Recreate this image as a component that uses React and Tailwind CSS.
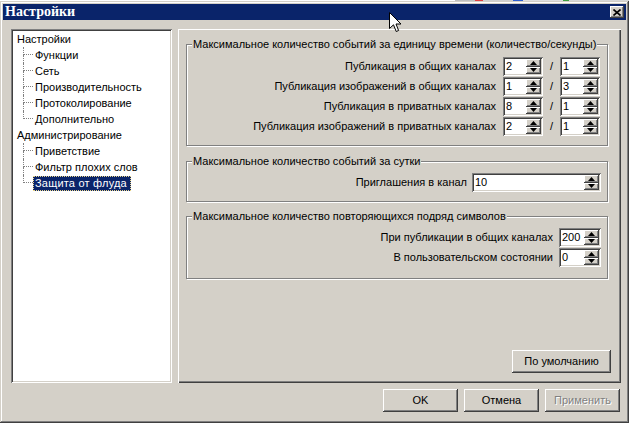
import React from "react";

const raised =
  "shadow-[inset_-1px_-1px_#404040,inset_1px_1px_#ffffff,inset_-2px_-2px_#808080,inset_2px_2px_#d4d0c8]";
const sunken =
  "shadow-[inset_1px_1px_#808080,inset_-1px_-1px_#ffffff,inset_2px_2px_#404040,inset_-2px_-2px_#d4d0c8]";

const tree = [
  {
    label: "Настройки",
    children: ["Функции", "Сеть", "Производительность", "Протоколирование", "Дополнительно"],
  },
  {
    label: "Администрирование",
    children: ["Приветствие", "Фильтр плохих слов", "Защита от флуда"],
  },
];
const selected = "Защита от флуда";

const perSecond = [
  ["Публикация в общих каналах", "2", "1"],
  ["Публикация изображений в общих каналах", "1", "3"],
  ["Публикация в приватных каналах", "8", "1"],
  ["Публикация изображений в приватных каналах", "2", "1"],
];

function Arrow({ up }) {
  return (
    <svg width="7" height="4" viewBox="0 0 7 4" className="block">
      {up ? <path d="M3.5 0 L7 4 L0 4 Z" fill="#000" /> : <path d="M0 0 L7 0 L3.5 4 Z" fill="#000" />}
    </svg>
  );
}

function SpinBtn({ up }) {
  return (
    <div className={`flex flex-1 items-center justify-center bg-[#d4d0c8] ${raised}`}>
      <Arrow up={up} />
    </div>
  );
}

function Spin({ value, width }) {
  return (
    <div className={`flex h-[19px] shrink-0 bg-white p-[2px] ${width} ${sunken}`}>
      <span className="flex-1 pl-[1px] leading-[15px] text-black">{value}</span>
      <div className="flex w-[15px] flex-col">
        <SpinBtn up />
        <SpinBtn />
      </div>
    </div>
  );
}

function Group({ title, className, children }) {
  return (
    <fieldset
      className={`mx-[6px] mr-[11px] border border-[#808080] shadow-[1px_1px_0_#ffffff,inset_1px_1px_0_#ffffff] ${className}`}
    >
      <legend className="ml-[5px] bg-[#d4d0c8] px-[1px] leading-[13px]">{title}</legend>
      {children}
    </fieldset>
  );
}

function Button({ children, disabled, className = "" }) {
  return (
    <div
      className={`flex h-[23px] items-center justify-center bg-[#d4d0c8] ${raised} ${
        disabled ? "text-[#808080] [text-shadow:1px_1px_0_#ffffff]" : "text-black"
      } ${className}`}
    >
      {children}
    </div>
  );
}

export default function App() {
  return (
    <div className="relative flex h-[423px] w-[629px] flex-col overflow-hidden bg-[#d4d0c8] font-['Liberation_Sans',Arial,sans-serif] text-[11px] text-black">
      {/* strip of desktop above the window */}
      <div className="flex h-[1px] shrink-0">
        <div className="w-[455px] bg-white" />
        <div className="w-[20px] bg-[#c0c0c0]" />
        <div className="w-[8px] bg-[#e04040]" />
        <div className="w-[30px] bg-[#d0d0d0]" />
        <div className="w-[10px] bg-[#3060d0]" />
        <div className="w-[40px] bg-[#e0e0e0]" />
        <div className="w-[6px] bg-[#40a040]" />
        <div className="flex-1 bg-[#d8d8d8]" />
      </div>

      <div className="flex flex-1 flex-col p-[3px] shadow-[inset_-1px_-1px_#404040,inset_1px_1px_#d4d0c8,inset_-2px_-2px_#808080,inset_2px_2px_#ffffff]">
        {/* title bar */}
        <div className="flex h-[16px] shrink-0 items-center justify-between bg-[#0a246a] pl-[2px] pr-[2px]">
          <span className="font-['Liberation_Serif',serif] text-[14px] font-bold leading-[16px] text-white">
            Настройки
          </span>
          <div className={`flex h-[12px] w-[14px] items-center justify-center bg-[#d4d0c8] ${raised}`}>
            <svg width="8" height="7" viewBox="0 0 8 7">
              <path d="M0.5 0.5 L7.5 6.5 M7.5 0.5 L0.5 6.5" stroke="#000" strokeWidth="1.6" />
            </svg>
          </div>
        </div>

        {/* body */}
        <div className="flex gap-[6px] pl-[8px] pr-[5px] pt-[9px]">
          {/* tree */}
          <div className={`h-[354px] w-[161px] shrink-0 bg-white p-[2px] ${sunken}`}>
            {tree.map((node) => (
              <div key={node.label}>
                <div className="flex h-[16px] items-center pl-[2px]">
                  <span className="px-[2px]">{node.label}</span>
                </div>
                {node.children.map((child, i) => {
                  const last = i === node.children.length - 1;
                  const sel = child === selected;
                  return (
                    <div key={child} className="flex h-[16px] pl-[10px]">
                      <div className="flex w-[10px] shrink-0 flex-col">
                        <div className="h-[8px] border-b border-l border-dotted border-[#808080]" />
                        <div
                          className={
                            last ? "h-[8px]" : "h-[8px] border-l border-dotted border-[#808080]"
                          }
                        />
                      </div>
                      <span
                        className={
                          sel
                            ? "self-center bg-[#0a246a] pl-[2px] pr-[4px] leading-[15px] tracking-[0.2px] text-white outline-1 -outline-offset-1 outline-dotted outline-[#e8d48a]"
                            : "self-center px-[2px] leading-[15px]"
                        }
                      >
                        {child}
                      </span>
                    </div>
                  );
                })}
              </div>
            ))}
          </div>

          {/* settings page */}
          <div className="flex h-[354px] w-[443px] flex-col p-[2px] shadow-[inset_1px_1px_#ffffff,inset_-1px_-1px_#404040,inset_-2px_-2px_#808080]">
            <Group
              title="Максимальное количество событий за единицу времени (количество/секунды)"
              className="mt-[7px] pb-[8px] pr-[7px] pt-[6px]"
            >
              {perSecond.map(([label, a, b]) => (
                <div key={label} className="flex h-[20px] items-start justify-end">
                  <span className="mr-[7px] leading-[19px]">{label}</span>
                  <Spin value={a} width="w-[40px]" />
                  <span className="w-[17px] text-center leading-[19px]">/</span>
                  <Spin value={b} width="w-[40px]" />
                </div>
              ))}
            </Group>

            <Group
              title="Максимальное количество событий за сутки"
              className="mt-[9px] pb-[9px] pr-[6px] pt-[5px]"
            >
              <div className="flex h-[19px] items-start justify-end">
                <span className="mr-[5px] leading-[19px]">Приглашения в канал</span>
                <Spin value="10" width="w-[129px]" />
              </div>
            </Group>

            <Group
              title="Максимальное количество повторяющихся подряд символов"
              className="mt-[8px] pb-[10px] pr-[6px] pt-[5px]"
            >
              <div className="flex h-[20px] items-start justify-end">
                <span className="mr-[6px] leading-[19px]">При публикации в общих каналах</span>
                <Spin value="200" width="w-[42px]" />
              </div>
              <div className="flex h-[20px] items-start justify-end">
                <span className="mr-[6px] leading-[19px]">В пользовательском состоянии</span>
                <Spin value="0" width="w-[42px]" />
              </div>
            </Group>

            <div className="mt-auto flex justify-end pb-[8px] pr-[8px]">
              <Button className="w-[99px]">По умолчанию</Button>
            </div>
          </div>
        </div>

        {/* dialog buttons */}
        <div className="flex justify-end gap-[6px] pr-[6px] pt-[6px]">
          <Button className="w-[75px]">OK</Button>
          <Button className="w-[75px]">Отмена</Button>
          <Button className="w-[75px]" disabled>
            Применить
          </Button>
        </div>
      </div>

      {/* mouse pointer */}
      <svg
        className="absolute left-[389px] top-[12px]"
        width="13"
        height="22"
        viewBox="0 0 13 22"
      >
        <path
          d="M0.5 0.5 L0.5 16.5 L4.5 12.8 L7.2 19.5 L9.6 18.5 L7 12 L12 12 Z"
          fill="#fff"
          stroke="#000"
          strokeWidth="1"
          strokeLinejoin="miter"
        />
      </svg>
    </div>
  );
}
